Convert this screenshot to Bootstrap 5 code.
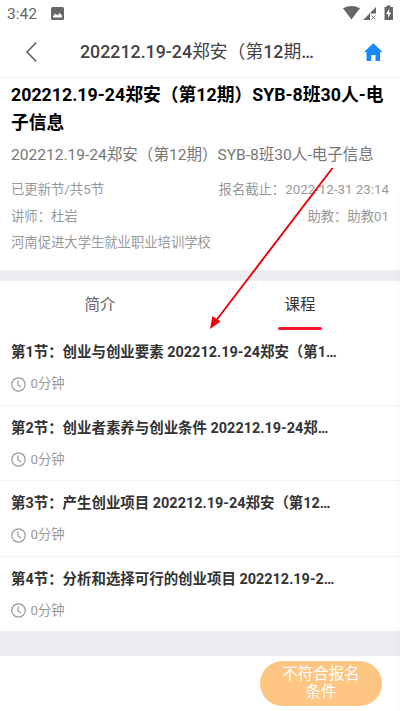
<!DOCTYPE html>
<html lang="zh-CN">
<head>
<meta charset="utf-8">
<meta name="viewport" content="width=device-width, initial-scale=1">
<title>课程</title>
<link href="https://cdn.jsdelivr.net/npm/bootstrap@5.3.0/dist/css/bootstrap.min.css" rel="stylesheet">
<style>
body{font-family:Roboto,"Noto Sans CJK SC",sans-serif;width:400px;height:711px;background:#fff;color:#333}
.statusbar{height:27px;padding:0 7px;color:#666;font-size:15.5px;line-height:27px}
.clock-text{padding-top:2px}
.topbar{height:51px;border-bottom:1px solid #eee}
.topbar-title{left:80px;font-size:17.8px;line-height:50px;color:#444}
.topbar-title b{font-weight:500}
.course{height:192px;padding:3px 11px 0}
.course h1{font-size:17.8px;line-height:28px;color:#000;margin:0}
.subtitle{font-size:15.56px;line-height:22px;color:#777;margin-top:7px}
.meta{font-size:13.33px;line-height:26.7px;color:#999;margin-top:11px}
.gap-band{background:#eeedf4}
.tabs{height:49px;font-size:15.5px;line-height:48px}
.tabs .on::after{content:"";position:absolute;left:78px;top:46px;width:44px;height:3px;border-radius:2px;background:#f5152f}
.lesson{height:75.6px;padding:12px 11px 0;border-bottom:1px solid #f3f3f3}
.lesson h2{font-size:14.44px;line-height:22px;margin:0;color:#333}
.dur{font-size:13.33px;line-height:20px;color:#999;margin-top:10px;gap:5px}
.dur svg{margin-left:-.5px}
.action{width:122px;height:45px;border-radius:23px;background:#ffc582;color:#fff;font-size:15.5px;line-height:18.5px;margin:5px 18px 0 0}
.thumb{left:396px;top:192px;width:4px;height:519px;background:rgba(0,0,0,.02)}
</style>
</head>
<body class="position-relative overflow-hidden">
<svg width="0" height="0" class="position-absolute"><symbol id="clock" viewBox="0 0 15 15"><circle cx="7.500" cy="7.500" r="6.700" fill="none" stroke="#999" stroke-width="1.200"/><path d="M7 3.500V8L10 9.900" fill="none" stroke="#999" stroke-width="1.200"/></symbol></svg>
<div class="statusbar d-flex align-items-center">
  <span class="clock-text">3:42</span>
  <svg class="position-absolute" style="left:51px;top:7px" width="13" height="13"><rect width="13" height="13" rx="1.500" fill="#666"/><path d="M2 10.500V9L4.500 6.500 6.500 8.500 8.500 6 11 8.500V10.500Z" fill="#fff"/></svg>
  <svg class="ms-auto" width="52" height="17" viewBox="341 5 52 17"><path d="M343 8.300Q351.500 3.800 360 8.300L351.500 19.500Z" fill="#666"/><path d="M376 7V13.500H370V20H363Z" fill="#666"/><path d="M371.500 15.500L375.500 19.500M375.500 15.500L371.500 19.500" stroke="#777"/><path d="M384.500 7H386.500V5.500H390.500V7H393V20H384.500Z" fill="#666"/><path d="M389.500 8.500L386 14H388V18L391 12.500H389Z" fill="#fff"/></svg>
</div>
<nav class="topbar position-relative">
  <svg class="position-absolute" style="left:24px;top:14px" width="15" height="22"><path d="M12.300 1.500L3 11 12.300 20.500" fill="none" stroke="#666" stroke-width="1.700"/></svg>
  <div class="topbar-title position-absolute text-nowrap"><b>202212.19-24</b>郑安（第<b>12</b>期<b>…</b></div>
  <svg class="position-absolute" style="left:364px;top:16px" width="19" height="19"><path d="M9.300.2L18.500 9H16V18H11.500V12H7.200V18H2.500V9H0Z" fill="#1688fb"/></svg>
</nav>
<section class="course">
  <h1 class="fw-bold text-nowrap">202212.19-24郑安（第12期）SYB-8班30人-电<br>子信息</h1>
  <div class="subtitle text-nowrap">202212.19-24郑安（第12期）SYB-8班30人-电子信息</div>
  <div class="meta">
    <div class="d-flex justify-content-between"><span>已更新节/共5节</span><span>报名截止：2022-12-31 23:14</span></div>
    <div class="d-flex justify-content-between"><span>讲师：杜岩</span><span>助教：助教01</span></div>
    <div>河南促进大学生就业职业培训学校</div>
  </div>
</section>
<div class="gap-band" style="height:11px"></div>
<div class="tabs row g-0 text-center">
  <div class="col-6" style="color:#666">简介</div>
  <div class="col-6 on position-relative">课程</div>
</div>
<div class="lesson"><h2 class="fw-bold text-nowrap">第1节：创业与创业要素 202212.19-24郑安（第1…</h2><div class="dur d-flex align-items-center"><svg width="15" height="15"><use href="#clock"/></svg>0分钟</div></div>
<div class="lesson"><h2 class="fw-bold text-nowrap">第2节：创业者素养与创业条件 202212.19-24郑…</h2><div class="dur d-flex align-items-center"><svg width="15" height="15"><use href="#clock"/></svg>0分钟</div></div>
<div class="lesson"><h2 class="fw-bold text-nowrap">第3节：产生创业项目 202212.19-24郑安（第12…</h2><div class="dur d-flex align-items-center"><svg width="15" height="15"><use href="#clock"/></svg>0分钟</div></div>
<div class="lesson border-0"><h2 class="fw-bold text-nowrap">第4节：分析和选择可行的创业项目 202212.19-2…</h2><div class="dur d-flex align-items-center"><svg width="15" height="15"><use href="#clock"/></svg>0分钟</div></div>
<div class="gap-band" style="height:25px;margin-top:-1.400px"></div>
<div class="d-flex justify-content-end"><button class="action btn p-0 border-0">不符合报名<br>条件</button></div>
<div class="thumb position-absolute"></div>
<svg class="position-absolute" style="left:205px;top:162px" width="134" height="172" viewBox="205 162 134 172"><path d="M332.500 168L215 322" stroke="#e80008" stroke-width="1.900"/><path d="M210 329L212.500 316 220.500 321.500Z" fill="#f00008"/></svg>
<script src="https://cdn.jsdelivr.net/npm/bootstrap@5.3.0/dist/js/bootstrap.bundle.min.js"></script>
</body>
</html>
